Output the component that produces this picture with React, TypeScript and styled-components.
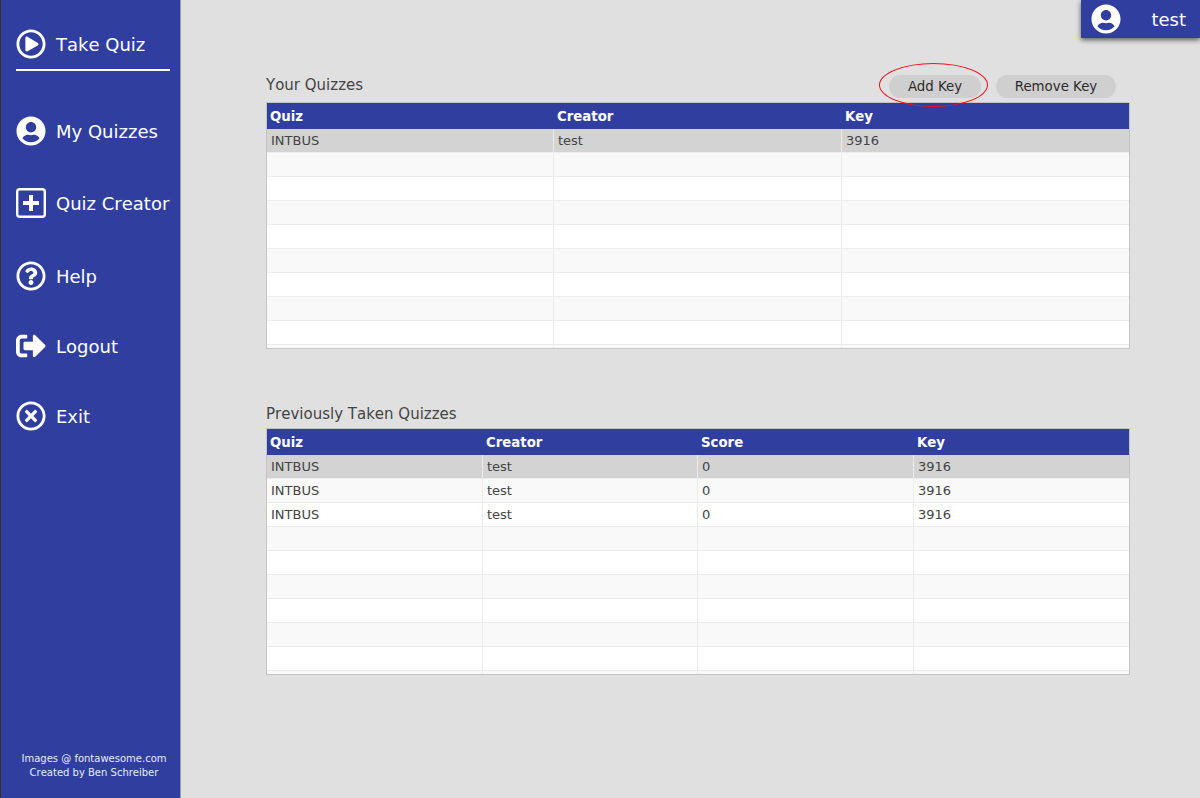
import React from 'react';
import styled, { createGlobalStyle } from 'styled-components';
import {
  FaRegPlayCircle,
  FaUserCircle,
  FaRegQuestionCircle,
  FaSignOutAlt,
  FaRegTimesCircle,
} from 'react-icons/fa';

const GlobalStyle = createGlobalStyle`
  html, body {
    margin: 0;
    height: 100%;
    background: #e0e0e0;
    font-family: 'DejaVu Sans', sans-serif;
    font-kerning: none;
  }
`;

const Page = styled.div`
  display: flex;
  height: 798px;
  overflow: hidden;
`;

const Sidebar = styled.nav`
  width: 181px;
  box-sizing: border-box;
  flex: none;
  display: flex;
  flex-direction: column;
  padding: 0 0 0 16px;
  background: #303f9f;
  border-left: 1px solid #333;
  border-right: 1px solid #999;
`;

const NavItem = styled.a<{ $top: number }>`
  display: flex;
  align-items: center;
  gap: 10px;
  height: 32px;
  margin-top: ${(props) => props.$top}px;
  margin-left: -1px;
  color: #fff;
  font-size: 18px;
  white-space: nowrap;

  svg {
    width: 30px;
    height: 30px;
    flex: none;
  }
`;

const ActiveLine = styled.div`
  width: 154px;
  height: 2px;
  margin: 9px 0 0 -1px;
  background: #fff;
`;

const Credits = styled.footer`
  margin: auto 0 0 -16px;
  padding: 0 0 18px;
  width: 186px;
  text-align: center;
  color: #e6e9ff;
  font-size: 10px;
  line-height: 14px;
`;

const Main = styled.main`
  flex: 1;
  min-width: 0;
  display: flex;
  flex-direction: column;
  padding: 0 70px 0 85px;
`;

const UserChip = styled.div`
  align-self: flex-end;
  display: flex;
  align-items: center;
  justify-content: space-between;
  box-sizing: border-box;
  width: 119px;
  height: 38px;
  margin-right: -70px;
  padding: 0 14px 0 10px;
  background: #303f9f;
  color: #fff;
  font-size: 18px;
  box-shadow: 0 2px 5px rgba(0, 0, 0, 0.6);

  svg {
    width: 30px;
    height: 30px;
  }
`;

const SectionHead = styled.div<{ $top: number }>`
  display: flex;
  align-items: flex-end;
  justify-content: space-between;
  height: 24px;
  margin-top: ${(props) => props.$top}px;
  padding-bottom: 4px;
`;

const Title = styled.h2<{ $lift: number }>`
  margin: 0 0 ${(props) => props.$lift}px;
  color: #444;
  font-size: 15px;
  font-weight: 400;
  line-height: 18px;
`;

const Actions = styled.div`
  display: flex;
  gap: 15px;
  margin-right: 14px;
`;

const PillButton = styled.button<{ $width: number }>`
  position: relative;
  width: ${(props) => props.$width}px;
  height: 23px;
  padding: 0;
  border: 0;
  border-radius: 12px;
  background: #cfcfcf;
  color: #2c2c2c;
  font-family: inherit;
  font-size: 13.33px;
`;

const Ring = styled.span`
  position: absolute;
  left: -10px;
  right: -7px;
  top: -12px;
  bottom: -9px;
  border: 1px solid #f01020;
  border-radius: 50%;
`;

const Frame = styled.div`
  height: 245px;
  border: 1px solid #c4c4c4;
  overflow: hidden;
  background: #fff;
`;

const Table = styled.table`
  width: 100%;
  border-collapse: separate;
  border-spacing: 0;
  table-layout: fixed;
  font-size: 13px;
`;

const HeadCell = styled.th`
  box-sizing: border-box;
  height: 26px;
  padding: 0 3px;
  background: #303f9f;
  color: #fff;
  font-weight: 700;
  font-size: 13.3px;
  text-align: left;
`;

const Row = styled.tr<{ $selected?: boolean }>`
  background: #fff;

  &:nth-child(even) {
    background: #f9f9f9;
  }

  ${(props) => props.$selected && '&& { background: #d3d3d3; }'}
`;

const Cell = styled.td`
  box-sizing: border-box;
  height: 24px;
  padding: 0 4px;
  border-bottom: 1px solid #ececec;
  border-right: 1px solid #ececec;
  color: #444;
  white-space: nowrap;

  &:last-child {
    border-right: 0;
  }
`;

const PlusSquareIcon = () => (
  <svg viewBox="0 0 30 30" fill="none">
    <rect x="1.2" y="1.2" width="27.6" height="27.6" rx="2.5" stroke="#fff" strokeWidth="2.4" />
    <path d="M7 13h6V7h4v6h6v4h-6v6h-4v-6H7z" fill="#fff" />
  </svg>
);

interface DataTableProps {
  columns: string[];
  widths: number[];
  rows: string[][];
  total: number;
}

const DataTable = ({ columns, widths, rows, total }: DataTableProps) => {
  const filler = Array.from({ length: total - rows.length }, () => columns.map(() => ''));

  return (
    <Frame>
      <Table>
        <colgroup>
          {widths.map((w, i) => (
            <col key={i} style={{ width: w }} />
          ))}
        </colgroup>
        <thead>
          <tr>
            {columns.map((c) => (
              <HeadCell key={c}>{c}</HeadCell>
            ))}
          </tr>
        </thead>
        <tbody>
          {[...rows, ...filler].map((row, i) => (
            <Row key={i} $selected={i === 0}>
              {row.map((value, j) => (
                <Cell key={j}>{value}</Cell>
              ))}
            </Row>
          ))}
        </tbody>
      </Table>
    </Frame>
  );
};

export default function App() {
  return (
    <>
      <GlobalStyle />
      <Page>
        <Sidebar>
          <NavItem $top={28}>
            <FaRegPlayCircle />
            Take Quiz
          </NavItem>
          <ActiveLine />
          <NavItem $top={44}>
            <FaUserCircle />
            My Quizzes
          </NavItem>
          <NavItem $top={40}>
            <PlusSquareIcon />
            Quiz Creator
          </NavItem>
          <NavItem $top={41}>
            <FaRegQuestionCircle />
            Help
          </NavItem>
          <NavItem $top={38}>
            <FaSignOutAlt />
            Logout
          </NavItem>
          <NavItem $top={38}>
            <FaRegTimesCircle />
            Exit
          </NavItem>
          <Credits>
            Images @ fontawesome.com
            <br />
            Created by Ben Schreiber
          </Credits>
        </Sidebar>
        <Main>
          <UserChip>
            <FaUserCircle />
            test
          </UserChip>
          <SectionHead $top={36}>
            <Title $lift={4}>Your Quizzes</Title>
            <Actions>
              <PillButton $width={92}>
                Add Key
                <Ring />
              </PillButton>
              <PillButton $width={120}>Remove Key</PillButton>
            </Actions>
          </SectionHead>
          <DataTable
            columns={['Quiz', 'Creator', 'Key']}
            widths={[287, 288, 287]}
            rows={[['INTBUS', 'test', '3916']]}
            total={10}
          />
          <SectionHead $top={51}>
            <Title $lift={1}>Previously Taken Quizzes</Title>
          </SectionHead>
          <DataTable
            columns={['Quiz', 'Creator', 'Score', 'Key']}
            widths={[216, 215, 216, 215]}
            rows={[
              ['INTBUS', 'test', '0', '3916'],
              ['INTBUS', 'test', '0', '3916'],
              ['INTBUS', 'test', '0', '3916'],
            ]}
            total={10}
          />
        </Main>
      </Page>
    </>
  );
}
